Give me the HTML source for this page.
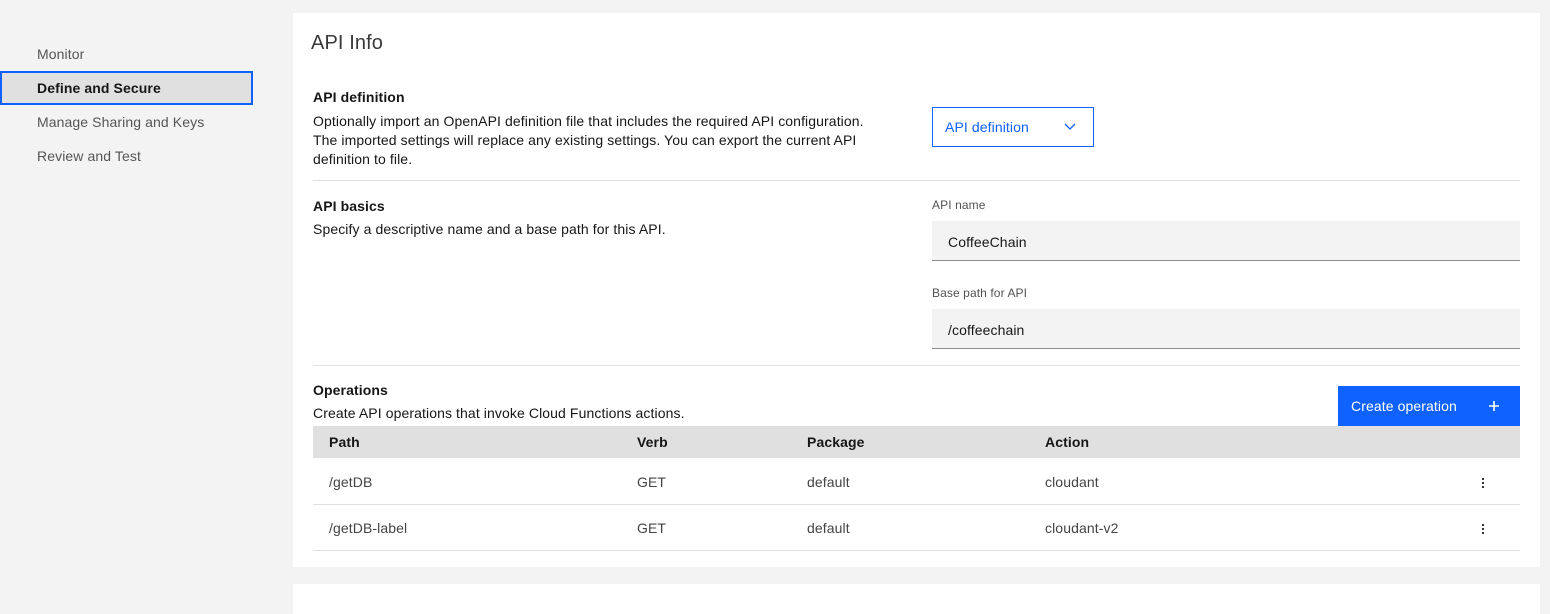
<!DOCTYPE html>
<html><head><meta charset="utf-8"><style>
*{margin:0;padding:0;box-sizing:border-box}
body{width:1550px;height:605px;background:#f3f3f3;font-family:"Liberation Sans",sans-serif;color:#161616;position:relative;overflow:hidden;font-size:14px;letter-spacing:0.1px}
.a{position:absolute;white-space:nowrap}
.nav{left:37px;color:#555;font-size:14px}
.panel{position:absolute;background:#fff}
.lbl{font-size:12px;color:#525252}
.inp{position:absolute;left:932px;width:588px;height:40px;background:#f3f3f3;border-bottom:1px solid #8d8d8d;padding:13px 16px;font-size:14px}
.hr{position:absolute;left:313px;width:1207px;height:1px;background:#e0e0e0}
.th{font-weight:bold;font-size:14px}
.td{color:#444;font-size:14px}
.dots{position:absolute;left:1482px;width:3px}
.dots i{display:block;width:2px;height:2px;background:#333;margin-bottom:2px}
</style></head><body>
<div class="a nav" style="top:46px">Monitor</div>
<div class="a" style="left:0;top:71px;width:253px;height:34px;background:#e0e0e0;border:2px solid #0f62fe"></div>
<div class="a" style="left:37px;top:80px;font-weight:bold;font-size:14px">Define and Secure</div>
<div class="a nav" style="top:114px">Manage Sharing and Keys</div>
<div class="a nav" style="top:148px">Review and Test</div>

<div class="panel" style="left:293px;top:13px;width:1247px;height:554px"></div>
<div class="panel" style="left:293px;top:584px;width:1247px;height:30px"></div>

<div class="a" style="left:311px;top:32px;font-size:20px;font-weight:400;color:#393939">API Info</div>
<div class="a" style="left:313px;top:89px;font-weight:bold">API definition</div>
<div class="a" style="left:313px;top:112px;line-height:19px">Optionally import an OpenAPI definition file that includes the required API configuration.<br>The imported settings will replace any existing settings. You can export the current API<br>definition to file.</div>
<div class="a" style="left:932px;top:107px;width:162px;height:40px;border:1px solid #0f62fe;color:#0f62fe;padding:11px 12px">API definition
<svg style="position:absolute;left:131px;top:15px" width="12" height="8" viewBox="0 0 12 8"><path d="M1 1l5 5 5-5" fill="none" stroke="#0f62fe" stroke-width="1.3"/></svg></div>
<div class="hr" style="top:180px"></div>

<div class="a" style="left:313px;top:198px;font-weight:bold">API basics</div>
<div class="a" style="left:313px;top:221px">Specify a descriptive name and a base path for this API.</div>
<div class="a lbl" style="left:932px;top:198px">API name</div>
<div class="inp" style="top:221px">CoffeeChain</div>
<div class="a lbl" style="left:932px;top:286px">Base path for API</div>
<div class="inp" style="top:309px">/coffeechain</div>
<div class="hr" style="top:365px"></div>

<div class="a" style="left:313px;top:382px;font-weight:bold">Operations</div>
<div class="a" style="left:313px;top:405px">Create API operations that invoke Cloud Functions actions.</div>
<div class="a" style="left:1338px;top:386px;width:182px;height:40px;background:#0f62fe;color:#fff;padding:12px 13px">Create operation<svg style="position:absolute;left:151px;top:15px" width="10" height="10" viewBox="0 0 10 10"><path d="M5 0v10M0 5h10" stroke="#fff" stroke-width="1.6"/></svg></div>
<div class="a" style="left:313px;top:426px;width:1207px;height:32px;background:#e0e0e0"></div>
<div class="a th" style="left:329px;top:434px">Path</div>
<div class="a th" style="left:637px;top:434px">Verb</div>
<div class="a th" style="left:807px;top:434px">Package</div>
<div class="a th" style="left:1045px;top:434px">Action</div>

<div class="a td" style="left:329px;top:474px">/getDB</div>
<div class="a td" style="left:637px;top:474px">GET</div>
<div class="a td" style="left:807px;top:474px">default</div>
<div class="a td" style="left:1045px;top:474px">cloudant</div>
<div class="dots" style="top:478px"><i></i><i></i><i></i></div>
<div class="hr" style="top:504px"></div>
<div class="a td" style="left:329px;top:520px">/getDB-label</div>
<div class="a td" style="left:637px;top:520px">GET</div>
<div class="a td" style="left:807px;top:520px">default</div>
<div class="a td" style="left:1045px;top:520px">cloudant-v2</div>
<div class="dots" style="top:524px"><i></i><i></i><i></i></div>
<div class="hr" style="top:550px"></div>
</body></html>
